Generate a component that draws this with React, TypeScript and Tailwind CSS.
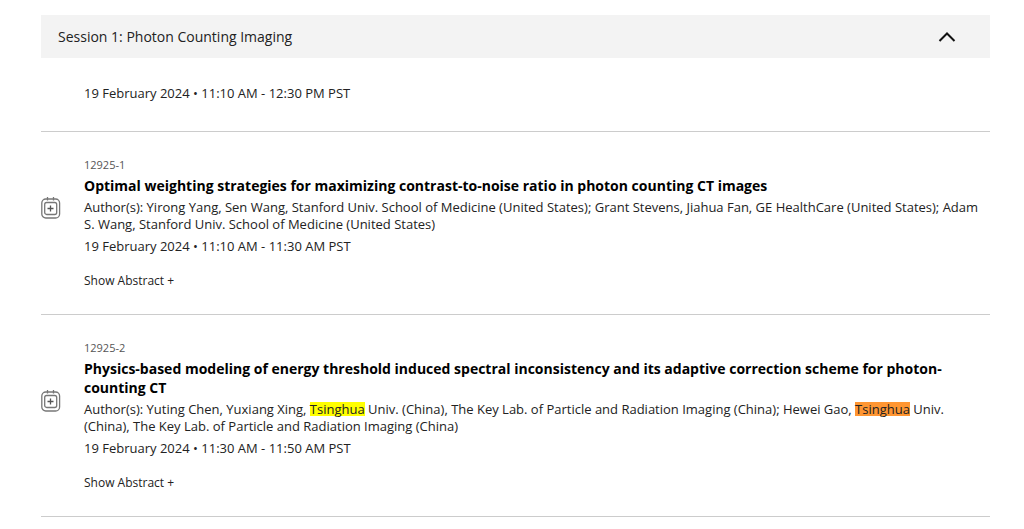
import type { ReactNode } from 'react';

type Paper = {
    id: string;
    title: string;
    authors: ReactNode;
    time: string;
};

const papers: Paper[] = [
    {
        id: '12925-1',
        title: 'Optimal weighting strategies for maximizing contrast-to-noise ratio in photon counting CT images',
        authors: 'Author(s): Yirong Yang, Sen Wang, Stanford Univ. School of Medicine (United States); Grant Stevens, Jiahua Fan, GE HealthCare (United States); Adam S. Wang, Stanford Univ. School of Medicine (United States)',
        time: '19 February 2024 • 11:10 AM - 11:30 AM PST',
    },
    {
        id: '12925-2',
        title: 'Physics-based modeling of energy threshold induced spectral inconsistency and its adaptive correction scheme for photon-counting CT',
        authors: (
            <>
                Author(s): Yuting Chen, Yuxiang Xing, <mark className="inline-block bg-[#ffff00] leading-[14px] text-inherit">Tsinghua</mark> Univ. (China), The Key Lab. of
                Particle and Radiation Imaging (China); Hewei Gao, <mark className="inline-block bg-[#ff9632] leading-[14px] text-inherit">Tsinghua</mark> Univ.
                (China), The Key Lab. of Particle and Radiation Imaging (China)
            </>
        ),
        time: '19 February 2024 • 11:30 AM - 11:50 AM PST',
    },
];

function CalendarAddIcon() {
    return (
        <svg className="h-6 w-5" viewBox="0 0 20 24" fill="none" stroke="#777777" strokeWidth="1.3" aria-hidden="true">
            <rect x="0.8" y="3" width="17.8" height="19" rx="4" />
            <rect x="3.7" y="6.5" width="12" height="12" rx="2" />
            <path d="M6.5 1v3.5M12.5 1v3.5" />
            <path d="M9.5 9.5v6M6.5 12.5h6" stroke="#555555" />
        </svg>
    );
}

function PaperRow({ paper }: { paper: Paper }) {
    return (
        <article className="border-b border-[#cccccc] pt-6 pb-[25px]">
            <div className="flex items-center">
                <button className="w-[43px] shrink-0" aria-label="Add to schedule">
                    <CalendarAddIcon />
                </button>
                <div className="min-w-0 flex-1 pb-[5px]">
                    <p className="text-[11px] leading-[17px] text-[#555555]">{paper.id}</p>
                    <h3 className="mt-[3px] text-[14px] leading-[19px] font-bold text-black">{paper.title}</h3>
                    <p className="mt-1">{paper.authors}</p>
                    <p className="mt-[5px]">{paper.time}</p>
                </div>
            </div>
            <button className="mt-3 ml-[43px] block text-[12px] leading-[17px]">Show Abstract +</button>
        </article>
    );
}

export default function App() {
    return (
        <main className="min-h-screen bg-white pt-[15px] pr-[34px] pl-[41px] font-['Open_Sans',sans-serif] text-[13px] leading-[17px] text-[#222222]">
            {/* Session header */}
            <h2>
                <button className="flex w-full items-center justify-between bg-[#f3f3f3] py-3 pr-[34px] pl-[17px] text-[14px] leading-[19px]" aria-expanded="true">
                    Session 1: Photon Counting Imaging
                    <svg className="h-3 w-[18px]" viewBox="0 0 18 12" fill="none" stroke="#111111" strokeWidth="2" aria-hidden="true">
                        <path d="M1.5 10L9 2.5l7.5 7.5" />
                    </svg>
                </button>
            </h2>

            <p className="border-b border-[#cccccc] pt-[27px] pb-[29px] pl-[43px]">19 February 2024 • 11:10 AM - 12:30 PM PST</p>

            {papers.map((paper) => (
                <PaperRow key={paper.id} paper={paper} />
            ))}
        </main>
    );
}
